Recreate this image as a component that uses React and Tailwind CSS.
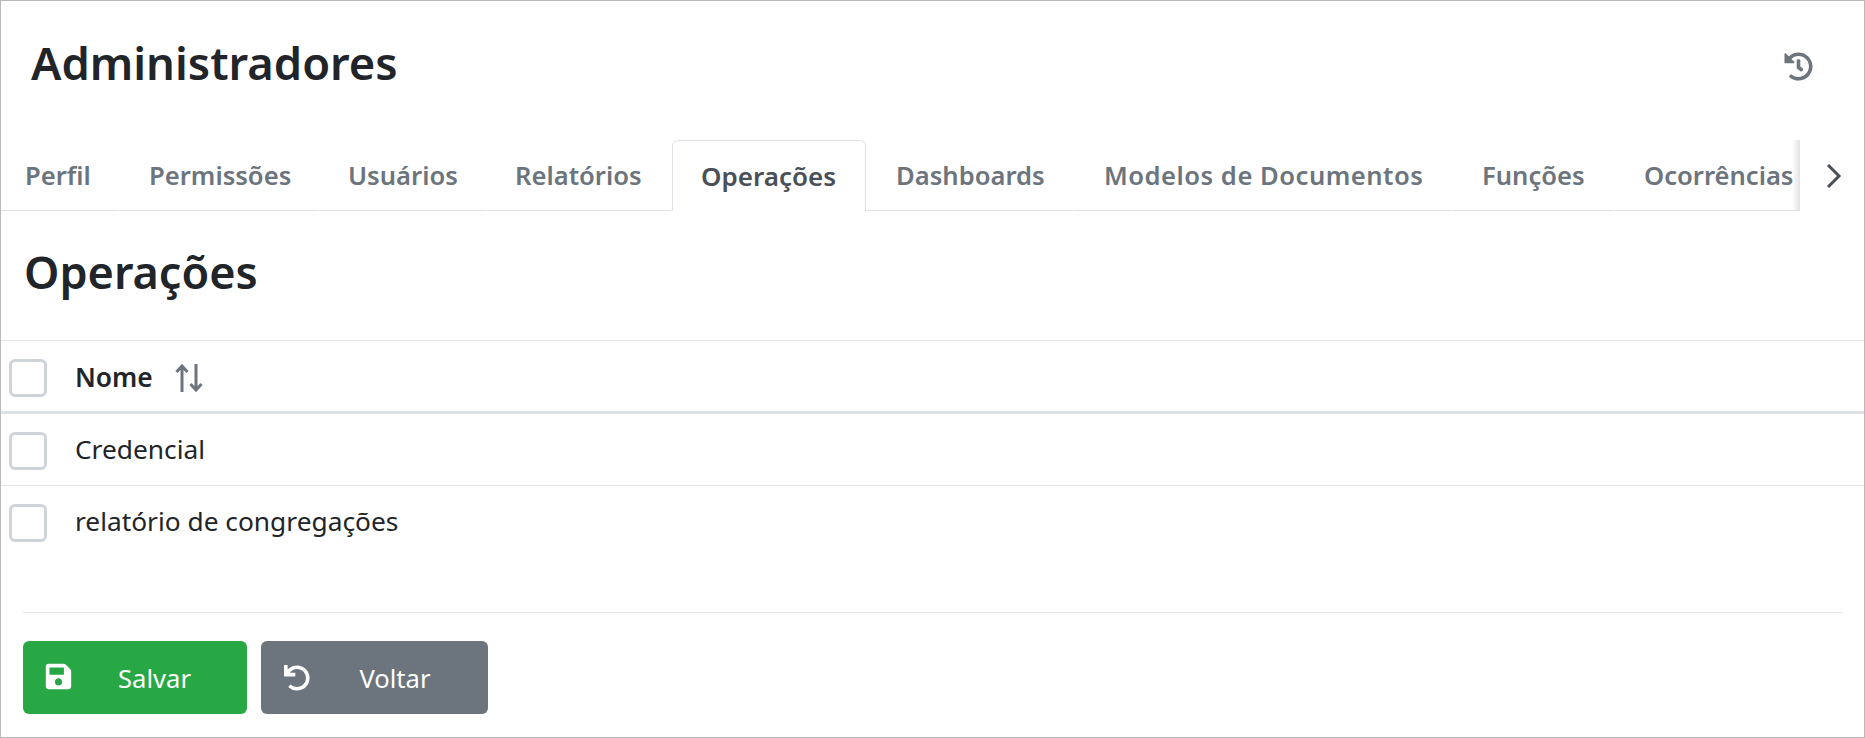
import { FaHistory, FaSave, FaUndo } from "react-icons/fa";

const tabs = [
  { label: "Perfil", width: "w-[117px]", pad: "pl-[24px]" },
  { label: "Permissões", width: "w-[199px]", pad: "pl-[30px]" },
  { label: "Usuários", width: "w-[167px]", pad: "pl-[29px]" },
  { label: "Relatórios", width: "w-[184px]", pad: "pl-[28px]" },
  { label: "Operações", width: "w-[194px]", pad: "pl-[28px]", active: true },
  { label: "Dashboards", width: "w-[207px]", pad: "pl-[30px]" },
  { label: "Modelos de Documentos", width: "w-[377px] tracking-[0.5px]", pad: "pl-[30px]" },
  { label: "Funções", width: "w-[161px]", pad: "pl-[30px]" },
  { label: "Ocorrências", width: "w-[187px]", pad: "pl-[30px]" },
];

const rows = ["Credencial", "relatório de congregações"];

const Checkbox = () => (
  <span className="block w-[38px] h-[38px] rounded-[6px] border-[3px] border-[#ced4da] bg-white shrink-0" />
);

const SortIcon = () => (
  <svg width="30" height="30" viewBox="0 0 30 30" fill="none" stroke="#6c757d" strokeWidth="3" className="ml-[21px]">
    <path d="M8 29V3M2.5 9 8 3l5.5 6" />
    <path d="M22 1v26M16.5 21l5.5 6 5.5-6" />
  </svg>
);

export default function App() {
  return (
    <div
      className="h-[738px] border border-[#b9b9b9] bg-white text-[#212529] flex flex-col overflow-hidden"
      style={{ fontFamily: '"Noto Sans", sans-serif' }}
    >
      <div className="flex items-center justify-between h-[139px] pl-[30px] pr-[51px]">
        <h1 className="text-[45.3px] leading-none font-semibold pb-[16px]">Administradores</h1>
        <FaHistory className="text-[#6c757d] text-[29px] mb-[8px]" />
      </div>

      <div className="flex items-center h-[71px]">
        <div className="relative flex w-[1799px] h-[71px] overflow-hidden">
          {tabs.map((tab) =>
            tab.active ? (
              <div
                key={tab.label}
                className={`${tab.width} ${tab.pad} shrink-0 flex items-center pt-[1px] border border-b-0 border-[#dee2e6] rounded-t-[6px] text-[#495057] text-[26px] font-semibold`}
              >
                {tab.label}
              </div>
            ) : (
              <div
                key={tab.label}
                className={`${tab.width} ${tab.pad} shrink-0 flex items-center pt-[2px] border-b border-[#dee2e6] mr-px text-[#6c757d] text-[25.6px] font-semibold whitespace-nowrap`}
              >
                {tab.label}
              </div>
            ),
          )}
          <div className="absolute right-0 top-0 bottom-0 w-[8px] bg-gradient-to-r from-transparent to-[#e2e2e2]" />
        </div>
        <svg width="16" height="26" viewBox="0 0 16 26" fill="none" stroke="#495057" strokeWidth="3" className="ml-[26px]">
          <path d="M2 2l11 11L2 24" />
        </svg>
      </div>

      <h2 className="text-[45px] leading-none font-semibold pl-[23px] pt-[38px] h-[129px]">Operações</h2>

      <div className="border-t border-[#e4e4e4] flex items-center h-[71px] pl-[8px] pt-[4px]">
        <Checkbox />
        <span className="ml-[28px] text-[26.3px] font-semibold">Nome</span>
        <SortIcon />
      </div>
      <div className="border-t-[3px] border-[#dee2e6] flex items-center h-[74px] pl-[8px] pt-[3px]">
        <Checkbox />
        <span className="ml-[28px] text-[26.3px] pb-[3px]">{rows[0]}</span>
      </div>
      <div className="border-t border-[#e4e4e4] flex items-center h-[71px] pl-[8px] pt-[3px]">
        <Checkbox />
        <span className="ml-[28px] text-[26.3px] pb-[1px]">{rows[1]}</span>
      </div>

      <div className="mx-[22px] mt-[56px] border-t border-[#e4e4e4] pt-[28px] flex gap-[14px]">
        <button className="relative w-[224px] h-[73px] rounded-[6px] bg-[#28a745] text-white text-[25.6px] flex items-center justify-center pl-[39px] pt-[3px]">
          <FaSave className="absolute left-[21px] top-[21px] text-[29px]" />
          Salvar
        </button>
        <button className="relative w-[227px] h-[73px] rounded-[6px] bg-[#6c757d] text-white text-[25.6px] flex items-center justify-center pl-[41px] pt-[3px]">
          <FaUndo className="absolute left-[23px] top-[24px] text-[26px]" />
          Voltar
        </button>
      </div>
    </div>
  );
}
